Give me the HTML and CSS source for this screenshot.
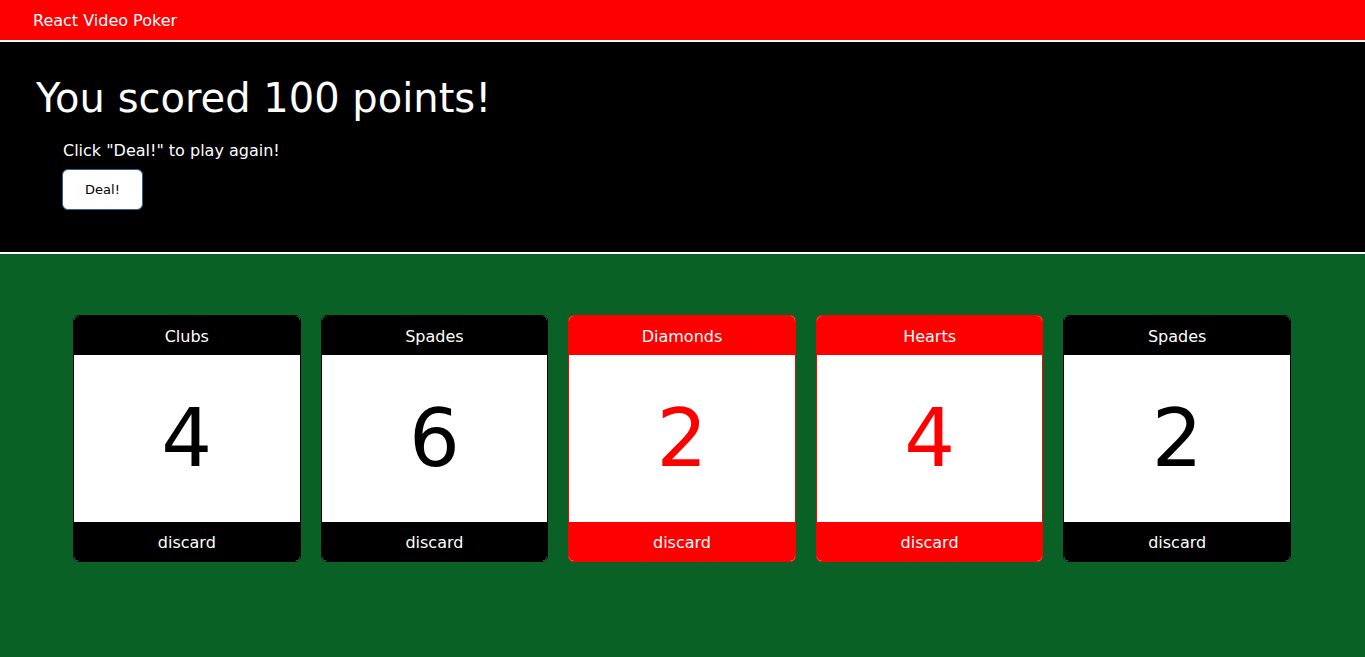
FILE: index.html
```html
<!DOCTYPE html>
<html>
<head>
<meta charset="utf-8">
<title>React Video Poker</title>
<link rel="stylesheet" href="styles.css">
</head>
<body>
<header class="topbar">React Video Poker</header>
<section class="status">
  <h1 class="score">You scored 100 points!</h1>
  <div class="controls">
    <p class="hint">Click "Deal!" to play again!</p>
    <button class="deal">Deal!</button>
  </div>
</section>
<main class="table">
  <div class="hand">
    <div class="card black">
      <div class="suit">Clubs</div>
      <div class="rank">4</div>
      <div class="discard">discard</div>
    </div>
    <div class="card black">
      <div class="suit">Spades</div>
      <div class="rank">6</div>
      <div class="discard">discard</div>
    </div>
    <div class="card red">
      <div class="suit">Diamonds</div>
      <div class="rank">2</div>
      <div class="discard">discard</div>
    </div>
    <div class="card red">
      <div class="suit">Hearts</div>
      <div class="rank">4</div>
      <div class="discard">discard</div>
    </div>
    <div class="card black">
      <div class="suit">Spades</div>
      <div class="rank">2</div>
      <div class="discard">discard</div>
    </div>
  </div>
</main>
</body>
</html>
```
FILE: styles.css
```css
html, body {
  margin: 0;
  padding: 0;
  height: 100%;
}
body {
  font-family: "DejaVu Sans", Verdana, sans-serif;
  background: #0a6125;
  display: flex;
  flex-direction: column;
}
.topbar {
  height: 40px;
  line-height: 41px;
  background: #ff0000;
  color: #fff;
  font-size: 16px;
  padding-left: 33px;
  border-bottom: 2px solid #fff;
}
.status {
  background: #000;
  color: #fff;
  height: 210px;
  border-bottom: 2px solid #fff;
  padding: 0 36px;
  box-sizing: content-box;
}
.score {
  margin: 0;
  padding-top: 32px;
  font-size: 40px;
  font-weight: normal;
  line-height: 48px;
}
.controls {
  padding-left: 27px;
}
.hint {
  margin: 19px 0 8px;
  font-size: 16px;
  line-height: 20px;
}
.deal {
  width: 81px;
  height: 41px;
  font-family: "DejaVu Sans", Verdana, sans-serif;
  font-size: 13px;
  background: #fff;
  color: #000;
  border: 1px solid #3a5a9a;
  border-radius: 6px;
  margin-left: -1px;
}
.table {
  flex: 1;
  padding: 61px 74px 0 73px;
}
.hand {
  display: flex;
  gap: 20px;
}
.card {
  flex: 1;
  height: 247px;
  box-sizing: border-box;
  border-radius: 6px;
  border: 1px solid;
  overflow: hidden;
  display: flex;
  flex-direction: column;
  background: #fff;
}
.card.black { border-color: #000; }
.card.red { border-color: #ff0000; }
.suit, .discard {
  color: #fff;
  text-align: center;
  font-size: 16px;
}
.suit {
  height: 39px;
  line-height: 42px;
}
.discard {
  height: 39px;
  line-height: 41px;
}
.black .suit, .black .discard { background: #000; }
.red .suit, .red .discard { background: #ff0000; }
.rank {
  flex: 1;
  display: flex;
  align-items: center;
  justify-content: center;
  font-size: 80px;
}
.black .rank { color: #000; }
.red .rank { color: #ff0000; }
```
